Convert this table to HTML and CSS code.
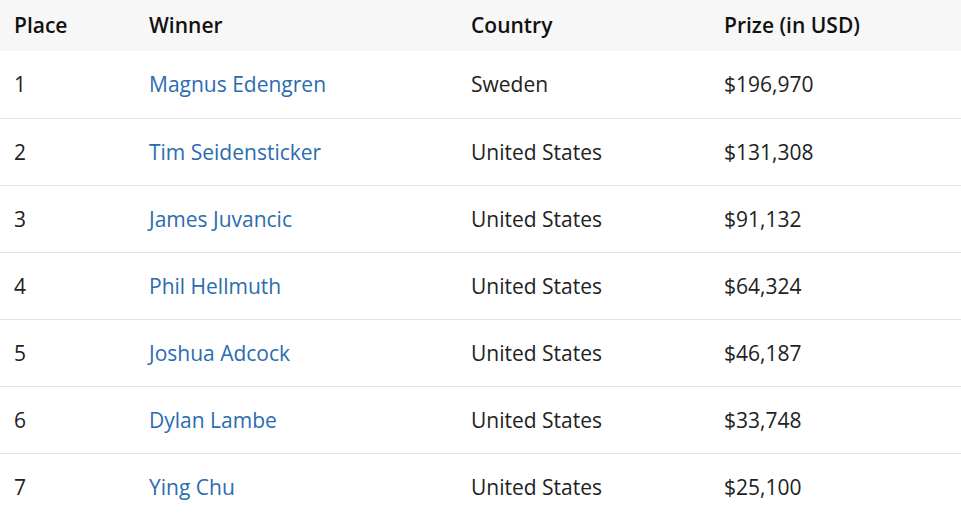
FILE: index.html
```html
<!DOCTYPE html>
<html>
<head>
<meta charset="utf-8">
<link rel="stylesheet" href="styles.css">
</head>
<body>
<table class="results">
  <colgroup>
    <col class="c-place"><col class="c-winner"><col class="c-country"><col class="c-prize">
  </colgroup>
  <thead>
    <tr><th>Place</th><th>Winner</th><th>Country</th><th>Prize (in USD)</th></tr>
  </thead>
  <tbody>
    <tr><td>1</td><td><a href="#">Magnus Edengren</a></td><td>Sweden</td><td>$196,970</td></tr>
    <tr><td>2</td><td><a href="#">Tim Seidensticker</a></td><td>United States</td><td>$131,308</td></tr>
    <tr><td>3</td><td><a href="#">James Juvancic</a></td><td>United States</td><td>$91,132</td></tr>
    <tr><td>4</td><td><a href="#">Phil Hellmuth</a></td><td>United States</td><td>$64,324</td></tr>
    <tr><td>5</td><td><a href="#">Joshua Adcock</a></td><td>United States</td><td>$46,187</td></tr>
    <tr><td>6</td><td><a href="#">Dylan Lambe</a></td><td>United States</td><td>$33,748</td></tr>
    <tr><td>7</td><td><a href="#">Ying Chu</a></td><td>United States</td><td>$25,100</td></tr>
  </tbody>
</table>
</body>
</html>
```
FILE: styles.css
```css
html, body {
  margin: 0;
  padding: 0;
  background: #ffffff;
}
body {
  font-family: "Open Sans", "Liberation Sans", sans-serif;
  font-size: 21px;
  color: #222222;
}
.results {
  width: 961px;
  border-collapse: collapse;
  table-layout: fixed;
}
.c-place { width: 135px; }
.c-winner { width: 322px; }
.c-country { width: 253px; }
.c-prize { width: 251px; }
.results th {
  background: #f7f7f7;
  font-weight: 600;
  color: #111111;
  text-align: left;
  height: 51px;
  padding: 0 14px 1px;
  box-sizing: border-box;
  vertical-align: middle;
}
.results td {
  height: 67px;
  padding: 0 14px;
  box-sizing: border-box;
  vertical-align: middle;
  border-bottom: 1px solid #e3e3e3;
}
.results tbody tr:last-child td {
  border-bottom: none;
}
.results a {
  color: #2b6cb0;
  text-decoration: none;
}
```
